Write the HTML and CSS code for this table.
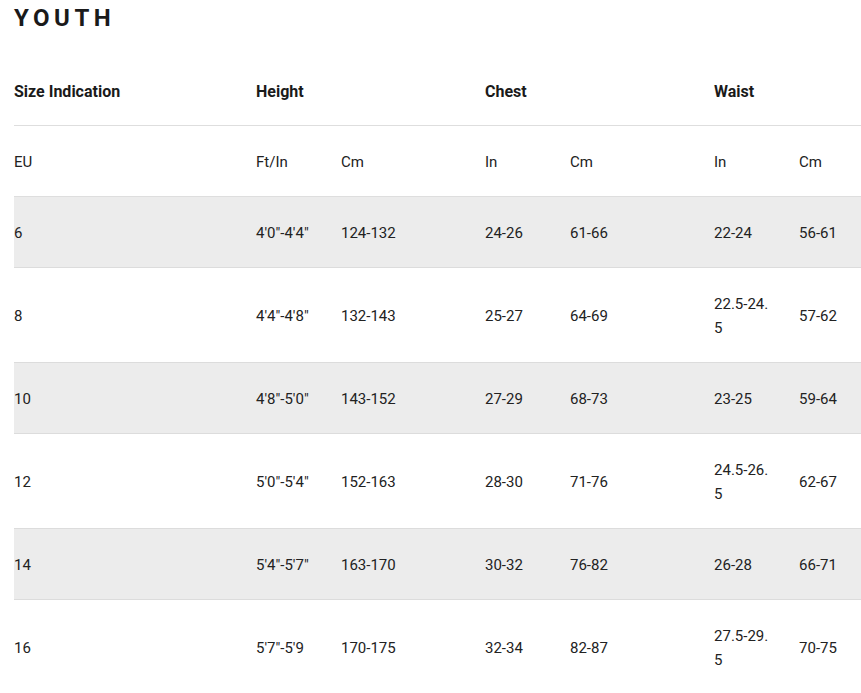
FILE: index.html
```html
<!DOCTYPE html>
<html lang="en">
<head>
<meta charset="utf-8">
<title>Youth size chart</title>
<link rel="stylesheet" href="styles.css">
</head>
<body>
<div class="page">
  <h1 class="title">YOUTH</h1>
  <div class="table-wrap">
    <table class="size-table">
      <colgroup>
        <col class="c-size">
        <col class="c-narrow"><col class="c-wide">
        <col class="c-narrow"><col class="c-wide">
        <col class="c-narrow"><col class="c-wide">
      </colgroup>
      <thead>
        <tr class="group-row">
          <th>Size Indication</th>
          <th colspan="2">Height</th>
          <th colspan="2">Chest</th>
          <th colspan="2">Waist</th>
        </tr>
        <tr class="unit-row">
          <td>EU</td>
          <td>Ft/In</td><td>Cm</td>
          <td>In</td><td>Cm</td>
          <td>In</td><td>Cm</td>
        </tr>
      </thead>
      <tbody>
        <tr class="shade"><td>6</td><td>4'0"-4'4"</td><td>124-132</td><td>24-26</td><td>61-66</td><td>22-24</td><td>56-61</td></tr>
        <tr><td>8</td><td>4'4"-4'8"</td><td>132-143</td><td>25-27</td><td>64-69</td><td>22.5-24.5</td><td>57-62</td></tr>
        <tr class="shade"><td>10</td><td>4'8"-5'0"</td><td>143-152</td><td>27-29</td><td>68-73</td><td>23-25</td><td>59-64</td></tr>
        <tr><td>12</td><td>5'0"-5'4"</td><td>152-163</td><td>28-30</td><td>71-76</td><td>24.5-26.5</td><td>62-67</td></tr>
        <tr class="shade"><td>14</td><td>5'4"-5'7"</td><td>163-170</td><td>30-32</td><td>76-82</td><td>26-28</td><td>66-71</td></tr>
        <tr><td>16</td><td>5'7"-5'9</td><td>170-175</td><td>32-34</td><td>82-87</td><td>27.5-29.5</td><td>70-75</td></tr>
      </tbody>
    </table>
  </div>
</div>
</body>
</html>
```
FILE: styles.css
```css
html, body {
  margin: 0;
  padding: 0;
  background: #ffffff;
}

body {
  font-family: Roboto, "Liberation Sans", Arial, sans-serif;
  color: #222222;
  overflow: hidden;
}

.page {
  padding-left: 14px;
  overflow: hidden;
}

.title {
  margin: 0 0 20px 0;
  font-size: 24px;
  line-height: 36px;
  font-weight: 700;
  letter-spacing: 4.5px;
  color: #1a1a1a;
}

.table-wrap {
  overflow: hidden;
}

.size-table {
  border-collapse: collapse;
  table-layout: fixed;
  width: 929px;
}

.c-size { width: 242px; }
.c-narrow { width: 85px; }
.c-wide { width: 144px; }

.size-table th,
.size-table td {
  padding: 24px 24px 22px 0;
  text-align: left;
  vertical-align: middle;
  font-size: 15px;
  line-height: 24px;
  word-break: break-all;
}

.size-table th {
  padding-bottom: 21px;
  font-size: 16px;
  font-weight: 700;
  color: #1a1a1a;
}

.size-table tr {
  border-bottom: 1px solid #dcdcdc;
}

.size-table tr.group-row,
.size-table tr.unit-row {
  border-bottom-color: #dedede;
}

.size-table tr.shade {
  background: #ececec;
}
```
